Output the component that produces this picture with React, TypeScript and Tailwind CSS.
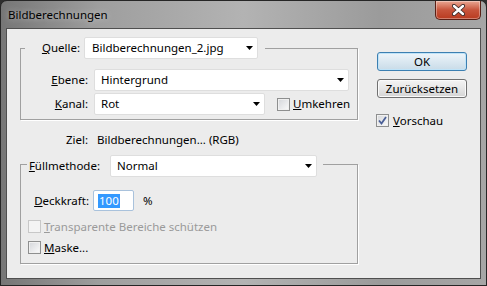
import React from "react";

function Arrow() {
  return (
    <svg width="7" height="4" viewBox="0 0 7 4" className="shrink-0">
      <path d="M0 0h7L3.5 4z" fill="#000" />
    </svg>
  );
}

function Combo({ value, className }: { value: string; className: string }) {
  return (
    <div
      className={`flex items-center justify-between h-[22px] bg-white border border-[#dedede] rounded-[2px] pl-[6px] pr-[4px] ${className}`}
    >
      <span className="whitespace-nowrap">{value}</span>
      <Arrow />
    </div>
  );
}

function Check({ checked, disabled }: { checked?: boolean; disabled?: boolean }) {
  return (
    <span
      className={`flex items-center justify-center w-[13px] h-[13px] shrink-0 border ${
        disabled
          ? "border-[#c8c8c8] bg-[#f4f4f4]"
          : "border-[#8e8f8f] bg-gradient-to-br from-[#d4d6da] to-[#fbfbfb] shadow-[inset_0_0_0_1px_#f0f0f0]"
      }`}
    >
      {checked && (
        <svg width="9" height="9" viewBox="0 0 9 9">
          <path d="M1 4.5l2.5 3L8 1" fill="none" stroke="#4a5f97" strokeWidth="1.8" />
        </svg>
      )}
    </span>
  );
}

function CloseButton() {
  return (
    <div className="flex items-center justify-center w-[46px] h-[19px] mr-[5px] rounded-b-[5px] border border-t-0 border-[#5a2016] bg-gradient-to-b from-[#e9a793] via-[#c7543b] to-[#b93a1f] shadow-[inset_0_0_0_1px_rgba(255,255,255,0.35)]">
      <svg width="13" height="12" viewBox="0 0 13 12">
        <path d="M2 2l9 8M11 2l-9 8" stroke="#3b2a28" strokeWidth="4.2" strokeLinecap="round" />
        <path d="M2 2l9 8M11 2l-9 8" stroke="#fff" strokeWidth="2.4" strokeLinecap="round" />
      </svg>
    </div>
  );
}

export default function App() {
  return (
    <div className="w-[487px] h-[286px] font-['Noto_Sans',sans-serif] text-[11.5px] text-black bg-[#2e2e2e]">
      <div className="flex flex-col w-[487px] h-[286px] rounded-t-[7px] border border-[#262626] bg-[linear-gradient(90deg,#767676_0%,#9e9e9e_20%,#b3b3b3_50%,#9b9b9b_78%,#a6a6a6_100%)]">
        {/* Title bar */}
        <div className="flex h-[27px] items-start justify-between">
          <span className="pl-[7px] pt-[5px] text-[11.5px] [text-shadow:0_0_6px_rgba(255,255,255,0.55)]">
            Bildberechnungen
          </span>
          <CloseButton />
        </div>

        {/* Client area */}
        <div className="flex mx-[5px] mb-[6px] h-[251px] border border-[#4f4f4f] bg-[#ececec]">
          {/* Left column */}
          <div className="flex flex-col pl-[13px] pt-[8px]">
            <fieldset className="w-[338px] border border-[#a0a0a0] shadow-[1px_1px_0_#fff] pb-[4px]">
              <legend className="ml-[4px] pr-[7px]">
                <div className="flex items-center h-[22px]">
                  <span className="w-[55px] text-right">
                    <u>Q</u>uelle:
                  </span>
                  <Combo value="Bildberechnungen_2.jpg" className="ml-[4px] w-[174px] pl-[7px]" />
                </div>
              </legend>
              <div className="flex items-center mt-[10px]">
                <span className="w-[67px] text-right">
                  <u>E</u>bene:
                </span>
                <Combo value="Hintergrund" className="ml-[6px] w-[255px]" />
              </div>
              <div className="flex items-center mt-[2px]">
                <span className="w-[67px] text-right">
                  <u>K</u>anal:
                </span>
                <Combo value="Rot" className="ml-[6px] w-[171px]" />
                <span className="ml-[12px]">
                  <Check />
                </span>
                <span className="ml-[3px]">
                  <u>U</u>mkehren
                </span>
              </div>
            </fieldset>

            <div className="flex items-center h-[16px] mt-[12px]">
              <span className="w-[68px] text-right">Ziel:</span>
              <span className="ml-[9px]">Bildberechnungen... (RGB)</span>
            </div>

            <fieldset className="w-[338px] mt-[4px] border border-[#a0a0a0] shadow-[1px_1px_0_#fff] pb-[9px]">
              <legend className="ml-[6px] pr-[6px]">
                <div className="flex items-center pt-[3px]">
                  <span className="w-[73px] text-right">
                    <u>F</u>üllmethode:
                  </span>
                  <Combo value="Normal" className="ml-[10px] w-[207px]" />
                </div>
              </legend>
              <div className="flex items-center mt-[13px]">
                <span className="w-[68px] text-right">
                  <u>D</u>eckkraft:
                </span>
                <div className="flex items-center ml-[4px] w-[41px] h-[21px] bg-white border border-[#a9c2dc] rounded-[2px] pl-[4px]">
                  <span className="bg-[#3399ff] text-white leading-[14px] px-[1px]">100</span>
                </div>
                <span className="ml-[9px]">%</span>
              </div>
              <div className="flex items-center h-[13px] mt-[9px] ml-[7px]">
                <Check disabled />
                <span className="ml-[3px] text-[#9a9a9a]">
                  <u>T</u>ransparente Bereiche schützen
                </span>
              </div>
              <div className="flex items-center h-[13px] mt-[8px] ml-[7px]">
                <Check />
                <span className="ml-[3px]">
                  <u>M</u>aske...
                </span>
              </div>
            </fieldset>
          </div>

          {/* Right column */}
          <div className="flex flex-col ml-[19px] pt-[23px]">
            <button className="w-[90px] h-[19px] rounded-[3px] border border-[#3c7fb1] bg-gradient-to-b from-[#eef5fa] via-[#dbe8f1] to-[#c9dbe8] shadow-[inset_0_0_0_1px_#bfe3f8] leading-none">
              OK
            </button>
            <button className="w-[90px] h-[19px] mt-[8px] rounded-[3px] border border-[#707070] bg-gradient-to-b from-[#f4f4f4] via-[#e6e6e6] to-[#d4d4d4] shadow-[inset_0_0_0_1px_#fafafa] leading-none">
              Zurücksetzen
            </button>
            <div className="flex items-center h-[13px] mt-[16px] -ml-[1px]">
              <Check checked />
              <span className="ml-[4px]">
                <u>V</u>orschau
              </span>
            </div>
          </div>
        </div>
      </div>
    </div>
  );
}
